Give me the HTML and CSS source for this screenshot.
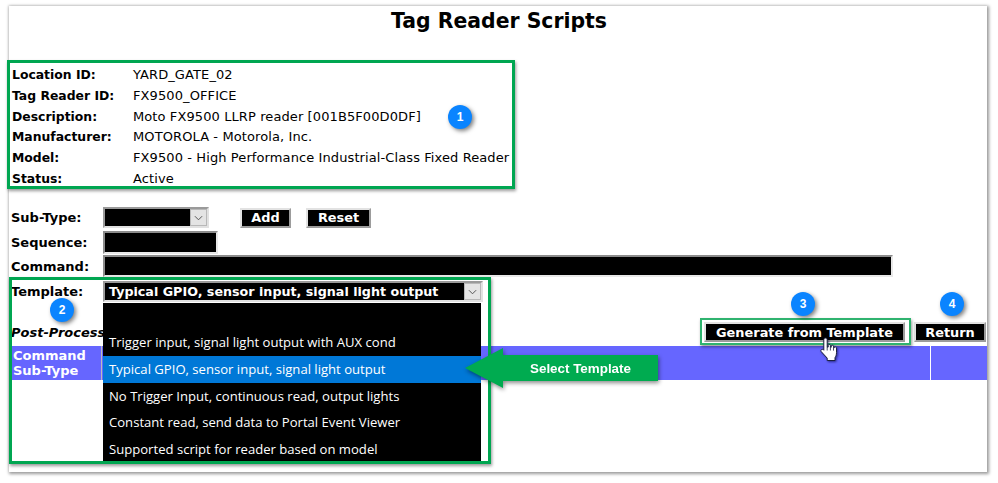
FILE: index.html
```html
<!DOCTYPE html>
<html lang="en">
<head>
<meta charset="utf-8">
<title>Tag Reader Scripts</title>
<link rel="stylesheet" href="styles.css">
</head>
<body>
<main class="panel">
  <h1 class="title">Tag Reader Scripts</h1>
  <section class="info">
    <div class="info-row"><b>Location ID:</b><span>YARD_GATE_02</span></div>
    <div class="info-row"><b>Tag Reader ID:</b><span>FX9500_OFFICE</span></div>
    <div class="info-row"><b>Description:</b><span>Moto FX9500 LLRP reader [001B5F00D0DF]</span></div>
    <div class="info-row"><b>Manufacturer:</b><span>MOTOROLA - Motorola, Inc.</span></div>
    <div class="info-row"><b>Model:</b><span>FX9500 - High Performance Industrial-Class Fixed Reader</span></div>
    <div class="info-row"><b>Status:</b><span>Active</span></div>
  </section>

  <section class="form">
    <div class="form-row row-subtype">
      <label>Sub-Type:</label>
      <div class="select select-sub"><span class="select-value"></span><span class="arrow"><svg viewBox="0 0 10 6" width="9" height="6"><path d="M1 1l4 4 4-4" fill="none" stroke="#555" stroke-width="1.1"/></svg></span></div>
      <button class="btn btn-add">Add</button>
      <button class="btn btn-reset">Reset</button>
    </div>
    <div class="form-row row-seq">
      <label>Sequence:</label>
      <div class="input input-seq"></div>
    </div>
    <div class="form-row row-cmd">
      <label>Command:</label>
      <div class="input input-cmd"></div>
    </div>
    <div class="form-row row-tpl">
      <label>Template:</label>
      <div class="select select-tpl"><span class="select-value">Typical GPIO, sensor input, signal light output</span><span class="arrow"><svg viewBox="0 0 10 6" width="9" height="6"><path d="M1 1l4 4 4-4" fill="none" stroke="#555" stroke-width="1.1"/></svg></span></div>
    </div>
    <div class="form-row row-post">
      <label class="post-label">Post-Processing:</label>
      <div class="post-actions">
        <button class="btn btn-gen">Generate from Template</button>
        <button class="btn btn-return">Return</button>
      </div>
    </div>
  </section>

  <div class="table-head">
    <div class="th th-first">Command<br>Sub-Type</div>
    <div class="th th-mid"></div>
    <div class="th th-last"></div>
  </div>

  <ul class="dropdown">
    <li class="opt opt-empty"></li>
    <li class="opt">Trigger input, signal light output with AUX cond</li>
    <li class="opt opt-active">Typical GPIO, sensor input, signal light output</li>
    <li class="opt">No Trigger Input, continuous read, output lights</li>
    <li class="opt">Constant read, send data to Portal Event Viewer</li>
    <li class="opt">Supported script for reader based on model</li>
  </ul>
</main>

<div class="callout callout-template"></div>
<div class="callout callout-generate"></div>

<div class="pointer">
  <svg viewBox="0 0 196 44" width="196" height="44"><polygon points="0,21 38,1 38,8 193,8 193,34 38,34 38,41" fill="#00ab50"/></svg>
  <span class="pointer-text">Select Template</span>
</div>

<span class="badge badge-1">1</span>
<span class="badge badge-2">2</span>
<span class="badge badge-3">3</span>
<span class="badge badge-4">4</span>

<svg class="hand" viewBox="0 0 20 25" width="20" height="25">
  <path d="M6.500 1c1.100 0 1.700.8 1.700 1.900v7.300l1-.1V8.500c0-1.400 2.100-1.400 2.200 0v1.700l.9 0V9.200c0-1.400 2.100-1.400 2.200 0v1.400l.8.100c.2-1.200 2.200-1.100 2.200.3v4.700c0 2.200-.7 3.500-1.500 5v2.800H8.200v-2.400L2.200 14.600c-1.100-1.400.7-3.100 2.100-1.900l.5.500V2.900C4.800 1.800 5.400 1 6.500 1z" fill="#fff" stroke="#1c2040" stroke-width="1"/>
  <path d="M8.200 10.200v3.300M11.400 10.200v3.300M14.500 10.600v3" stroke="#1c2040" stroke-width=".8" fill="none"/>
</svg>
</body>
</html>
```
FILE: styles.css
```css
* { box-sizing: border-box; }
html, body { margin: 0; padding: 0; background: #fff; }
body { position: relative; width: 998px; height: 483px; overflow: hidden; font-family: "DejaVu Sans", Verdana, sans-serif; font-size: 13px; color: #000; }

.panel {
  position: relative;
  width: 978px;
  height: 466px;
  margin: 6px 0 0 9px;
  background: #fff;
  box-shadow: 1px 1px 3px 1px rgba(0,0,0,.4), -1px -1px 2px rgba(0,0,0,.04);
}
.title { margin: 0; height: 54px; padding: 2px 0 0 2px; font-size: 20.4px; line-height: 26px; font-weight: 700; text-align: center; }

.info { width: 508px; height: 129px; margin-left: -2px; padding: 2px 0 0 2px; border: 3px solid #00a651; box-shadow: 1px 2px 3px rgba(0,0,0,.4); font-size: 12.4px; }
.info-row { display: grid; grid-template-columns: 121px 1fr; height: 20.8px; line-height: 20.8px; white-space: nowrap; }
.info-row span { font-size: 13px; letter-spacing: .1px; }

.form { display: flex; flex-direction: column; padding-left: 2px; font-size: 13px; font-weight: 700; margin-top: 18px; }
.form-row { display: flex; align-items: center; position: relative; }
.form-row label { width: 92px; flex: none; white-space: nowrap; }
.row-subtype { height: 21px; }
.row-seq { height: 23px; margin-top: 3px; }
.row-cmd { height: 22px; margin-top: 1px; }
.row-tpl { height: 21px; margin-top: 4px; }
.row-post { height: 21px; margin-top: 20px; }
.post-label { font-style: italic; font-size: 13px; }

.select { display: flex; background: #000; border: 2px solid #e1e1e1; border-top-color: #9a9a9a; border-left-color: #9a9a9a; height: 21px; color: #fff; }
.select-sub { width: 106px; }
.select-tpl { width: 380px; }
.select-value { flex: 1; padding-left: 4px; line-height: 18px; white-space: nowrap; font-size: 12.7px; }
.arrow { width: 17px; flex: none; background: #e4e4e4; border: 1px solid #b8b8b8; display: flex; align-items: center; justify-content: center; }

.input { background: #000; border: 2px solid #e8e8e8; border-top-color: #8c8c8c; border-left-color: #8c8c8c; height: 100%; }
.input-seq { width: 115px; }
.input-cmd { width: 790px; }

.btn { background: #000; color: #fff; font: 700 12.9px "DejaVu Sans", Verdana, sans-serif; height: 20px; padding: 0; border: 2px solid #9c9c9c; border-top-color: #e2e2e2; border-left-color: #e2e2e2; line-height: 15px; }
.btn-add { width: 51px; margin-left: 31px; }
.btn-reset { width: 65px; margin-left: 15px; }
.post-actions { display: flex; gap: 9px; margin-left: auto; margin-right: 1px; margin-top: -1px; }
.btn-gen { width: 201px; }
.btn-return { width: 72px; }

.table-head { display: flex; margin: 3px 0 0 3px; height: 34px; font-size: 13px; font-weight: 700; color: #fff; background: #6666ff; }
.th-first { width: 90px; line-height: 15px; padding: 2px 0 0 1px; border-right: 1px solid #bbb; }
.th-mid { width: 829px; border-right: 1px solid #fff; }
.th-last { flex: 1; }

.dropdown { position: absolute; left: 94px; top: 297px; width: 378px; height: 161px; margin: 0; padding: 0; list-style: none; background: #000; color: #fff; font-family: "Open Sans", sans-serif; font-size: 13.100px; }
.opt { height: 26.800px; line-height: 26.800px; padding-left: 6px; white-space: nowrap; }
.opt-empty { height: 26px; }
.opt-active { background: #0078d7; }

.callout { position: absolute; border: 3px solid #00a651; box-shadow: 1px 2px 3px rgba(0,0,0,.4); }
.callout-template { left: 9px; top: 277px; width: 482px; height: 187px; }
.callout-generate { left: 700px; top: 318px; width: 211px; height: 27px; border-width: 2px; border-color: #2fb36f; }

.pointer { position: absolute; left: 465px; top: 347px; width: 196px; height: 44px; filter: drop-shadow(1px 2px 2px rgba(0,0,0,.45)); }
.pointer svg { display: block; }
.pointer-text { position: absolute; left: 65px; top: 14px; font: 700 13.400px/16px "Liberation Sans", Arial, sans-serif; color: #fff; white-space: nowrap; }

.badge { position: absolute; width: 24px; height: 24px; border-radius: 50%; background: #0a84ff; color: #fff; font: 700 12px/24px "Liberation Sans", Arial, sans-serif; text-align: center; box-shadow: 2px 2px 4px rgba(0,0,0,.5); }
.badge-1 { left: 448px; top: 105px; }
.badge-2 { left: 50px; top: 298px; }
.badge-3 { left: 791px; top: 292px; }
.badge-4 { left: 940px; top: 292px; }

.hand { position: absolute; left: 819px; top: 337px; filter: drop-shadow(1px 1px 1px rgba(0,0,60,.6)); }
```
